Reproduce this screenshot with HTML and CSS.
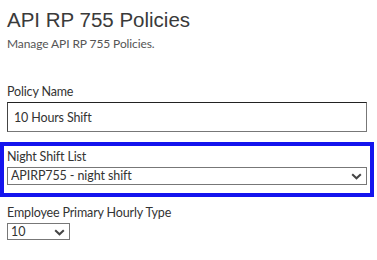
FILE: index.html
```html
<!DOCTYPE html>
<html lang="en">
<head>
  <meta charset="UTF-8" />
  <title>API RP 755 Policies</title>
  <link rel="stylesheet" href="styles.css">
</head>
<body>

  <div class="page">
    <h1 class="title">API RP 755 Policies</h1>
    <p class="subtitle">Manage API RP 755 Policies.</p>

    <div class="field field-name">
      <label for="policyName">Policy Name</label>
      <input id="policyName" class="text-input" type="text" value="10 Hours Shift">
    </div>

    <div class="field field-focus">
      <label for="nightShift">Night Shift List</label>
      <div class="select-wrap">
        <select id="nightShift" class="select">
          <option>APIRP755 - night shift</option>
        </select>
        <svg class="chevron" width="11" height="7" viewBox="0 0 11 7">
          <path d="M1.2 1.2 L5.5 5.3 L9.8 1.2" fill="none" stroke="#444" stroke-width="2"/>
        </svg>
      </div>
    </div>

    <div class="field field-type">
      <label for="hourlyType">Employee Primary Hourly Type</label>
      <div class="select-wrap small">
        <select id="hourlyType" class="select">
          <option>10</option>
        </select>
        <svg class="chevron" width="11" height="7" viewBox="0 0 11 7">
          <path d="M1.2 1.2 L5.5 5.3 L9.8 1.2" fill="none" stroke="#444" stroke-width="2"/>
        </svg>
      </div>
    </div>
  </div>

</body>
</html>
```

FILE: styles.css
```css
* {
  box-sizing: border-box;
}

html, body {
  margin: 0;
  padding: 0;
  background: #fff;
  font-family: 'Lato', sans-serif;
  color: #333;
}

.page {
  padding: 8px 10px 0 7px;
}

.title {
  margin: 0;
  font-family: 'Liberation Sans', Arial, sans-serif;
  font-weight: normal;
  font-size: 20.5px;
  line-height: 24px;
  color: #3a3a3a;
}

.subtitle {
  margin: 5px 0 0;
  font-size: 12px;
  line-height: 14px;
  letter-spacing: -0.1px;
  color: #555;
}

.field label {
  display: block;
  margin-bottom: 3px;
  font-size: 12.5px;
  line-height: 15px;
  letter-spacing: -0.15px;
  color: #333;
}

.field-name {
  margin-top: 33px;
}

.text-input {
  display: block;
  width: 100%;
  height: 30px;
  padding: 0 6px;
  border: 1px solid #777;
  border-top-color: #222;
  border-left-color: #444;
  font-family: 'Lato', sans-serif;
  font-size: 12.5px;
  letter-spacing: -0.15px;
  color: #333;
  outline: none;
}

.field-focus {
  margin-top: 17px;
  padding-bottom: 5px;
  outline: 4px solid #1414ee;
  outline-offset: 3px;
}

.select-wrap {
  position: relative;
}

.select-wrap.small {
  width: 63px;
}

.select {
  display: block;
  width: 100%;
  height: 18px;
  padding: 0 3px;
  border: 1px solid #777;
  border-radius: 0;
  background: #fff;
  -webkit-appearance: none;
  appearance: none;
  font-family: 'Lato', sans-serif;
  font-size: 12.5px;
  line-height: 16px;
  letter-spacing: -0.1px;
  color: #333;
}

.select-wrap.small .select {
  height: 17px;
}

.chevron {
  position: absolute;
  right: 5px;
  top: 6px;
}

.field-type {
  margin-top: 15px;
}
```
